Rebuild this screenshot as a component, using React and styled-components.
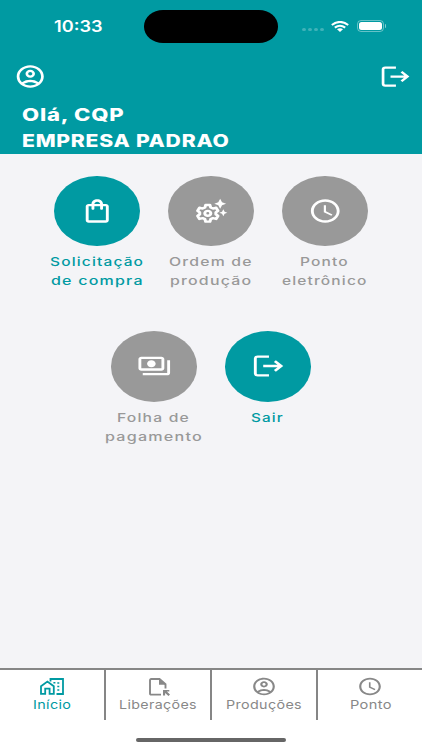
import React, { useLayoutEffect, useRef, useState } from "react";
import styled, { createGlobalStyle } from "styled-components";
import {
  MdOutlineAccountCircle,
  MdOutlineShoppingBag,
  MdAccessTime,
  MdOutlinePayments,
} from "react-icons/md";

const TEAL = "#009aa2";
const GREY = "#999999";

const GlobalStyle = createGlobalStyle`
  * { box-sizing: border-box; }
  body { margin: 0; font-family: Inter, "Liberation Sans", sans-serif; }
`;

const Screen = styled.div`
  width: 422px;
  height: 750px;
  display: flex;
  flex-direction: column;
  background: #f4f4f7;
  overflow: hidden;
`;

const Header = styled.header`
  height: 154px;
  flex: none;
  background: ${TEAL};
  color: #fff;
`;

const StatusBar = styled.div`
  height: 42px;
  padding: 10px 36px 0 54px;
  display: grid;
  grid-template-columns: 90px 134px 1fr;
  align-items: start;
`;

const Island = styled.div`
  height: 32.5px;
  border-radius: 19px / 16.25px;
  background: #000;
`;

const StatusTime = styled.div`
  padding-top: 6px;
`;

const StatusIcons = styled.div`
  height: 32px;
  display: flex;
  align-items: center;
  justify-content: flex-end;
`;

const HeaderActions = styled.div`
  height: 60px;
  padding: 9px 11px 0 14px;
  display: flex;
  align-items: center;
  justify-content: space-between;
`;

const Greeting = styled.div`
  padding-left: 22px;
`;

const Line = styled.div`
  display: flex;
  justify-content: ${(p) => p.$align || "center"};
  height: ${(p) => p.$height}px;
  line-height: ${(p) => p.$height}px;
`;

const LineBox = styled.span`
  flex: none;
  display: block;
  text-align: left;
`;

const LineText = styled.span`
  display: inline-block;
  white-space: nowrap;
  transform-origin: 0 50%;
  font-size: ${(p) => p.$size}px;
  font-weight: ${(p) => p.$weight};
  letter-spacing: ${(p) => p.$spacing}px;
  margin-right: ${(p) => -p.$spacing}px;
`;

/* One line of text, widened to the given width. */
function WideText({ children, width, size, weight = 400, spacing = 0, height = 18.7, align }) {
  const ref = useRef(null);
  const [scale, setScale] = useState(1);
  useLayoutEffect(() => {
    setScale(width / (ref.current.offsetWidth - spacing));
  }, [width, size, weight, spacing, children]);
  return (
    <Line $align={align} $height={height}>
      <LineBox style={{ width }}>
        <LineText
          ref={ref}
          $size={size}
          $weight={weight}
          $spacing={spacing}
          style={{ transform: `scaleX(${scale})` }}
        >
          {children}
        </LineText>
      </LineBox>
    </Line>
  );
}

const Glyph = styled.span`
  display: block;
  flex: none;
  width: ${(p) => p.$w}px;
  height: ${(p) => p.$h}px;
  svg { display: block; width: 100%; height: 100%; }
`;

const Icon = ({ as: Shape, w, h }) => (
  <Glyph $w={w} $h={h}>
    <Shape preserveAspectRatio="none" />
  </Glyph>
);

const ExitIcon = (props) => (
  <svg viewBox="0 0 24 24" fill="none" stroke="currentColor" strokeWidth="2" {...props}>
    <path d="M12.5 4H4.6Q3 4 3 5.6V18.4Q3 20 4.6 20H12.5" />
    <path d="M8.5 12H21M16.6 7.8L21 12L16.6 16.2" />
  </svg>
);

const GearIcon = (props) => (
  <svg viewBox="0 0 24 24" fill="none" stroke="currentColor" strokeWidth="2.1" {...props}>
    <g transform="translate(9.6 14)">
      <path
        strokeLinejoin="round"
        d="M-1.5 -7.1H1.5L2 -5L3.6 -4.1L5.8 -4.8L7.1 -2.2L5.6 -.8V.8L7.1 2.2L5.8 4.8L3.6 4.1L2 5L1.5 7.1H-1.5L-2 5L-3.6 4.1L-5.8 4.8L-7.1 2.2L-5.6 .8V-.8L-7.1 -2.2L-5.8 -4.8L-3.6 -4.1L-2 -5Z"
      />
      <circle r="2.1" />
    </g>
    <g fill="currentColor" stroke="none">
      <path d="M18.2 1.5L19.5 4.5L22.3 5.8L19.5 7.1L18.2 10.1L16.9 7.1L14.1 5.8L16.9 4.5Z" />
      <path d="M20.4 10.5L21.3 12.6L23.2 13.5L21.3 14.4L20.4 16.5L19.5 14.4L17.6 13.5L19.5 12.6Z" />
    </g>
  </svg>
);

const HomeIcon = (props) => (
  <svg viewBox="0 0 24 17" fill="none" stroke="currentColor" strokeWidth="1.8" {...props}>
    <path d="M1 15.9V8.3L7.4 3.5L13.8 8.3V15.9H9.6V10.6H5.2V15.9Z" />
    <path d="M10.5 3.5V1H23V16H16.5" />
    <path d="M18.3 4.2V5.8M18.3 7.7V9.3M18.3 11.2V12.8M14.4 4V5.4" strokeWidth="2" />
  </svg>
);

const FileIcon = (props) => (
  <svg viewBox="0 0 21 18" fill="none" stroke="currentColor" strokeWidth="1.9" {...props}>
    <path d="M12 16.6H2.2Q1 16.6 1 15.4V2.2Q1 1 2.2 1H10.5L16.5 6.2V10.5" />
    <path d="M10 1V6.8H16.8Z" fill="currentColor" stroke="none" />
    <path d="M14 12H20.3V13.6H17.8L21 16.6L19.5 18L16.1 14.9V17.4H14Z" fill="currentColor" stroke="none" />
  </svg>
);

const WifiIcon = (props) => (
  <svg viewBox="0 0 18 11" fill="none" stroke="currentColor" strokeWidth="2.1" {...props}>
    <path d="M.8 4Q9-2.1 17.2 4M3.8 6.7Q9 2.8 14.2 6.7" />
    <path d="M6 8.3Q9 6.1 12 8.3L9 11Z" fill="currentColor" stroke="none" />
  </svg>
);

const Dots = styled.div`
  display: flex;
  gap: 2.2px;
  margin: 7px 7px 0 0;
`;

const Dot = styled.i`
  width: 3.7px;
  height: 3px;
  border-radius: 50%;
  background: rgba(255, 255, 255, 0.25);
`;

const Battery = styled.div`
  width: 27px;
  height: 12px;
  margin-left: 8px;
  padding: 1px;
  border: 1px solid rgba(255, 255, 255, 0.4);
  border-radius: 4px;
  display: flex;
`;

const Charge = styled.i`
  flex: 1;
  border-radius: 2.5px;
  background: #fff;
`;

const BatteryTip = styled.i`
  width: 1.5px;
  height: 4px;
  margin-left: 1px;
  border-radius: 0 2px 2px 0;
  background: rgba(255, 255, 255, 0.5);
`;

const Menu = styled.main`
  flex: 1;
  padding-top: 21.5px;
`;

const MenuRow = styled.div`
  height: 155.7px;
  display: flex;
  align-items: flex-start;
  justify-content: center;
  gap: 14px;
`;

const MenuItem = styled.button`
  width: 100px;
  padding: 0;
  border: 0;
  background: none;
  font-family: inherit;
  color: ${(p) => (p.$active ? TEAL : GREY)};
`;

const Disc = styled.div`
  width: 86px;
  height: 70.5px;
  margin: 0 auto 6.2px;
  border-radius: 50%;
  display: flex;
  align-items: center;
  justify-content: center;
  color: #fff;
  background: ${(p) => (p.$active ? TEAL : GREY)};
`;

const MenuLabel = styled.div`
  padding-right: 2px;
`;

const rows = [
  [
    { icon: MdOutlineShoppingBag, active: true, lines: [["Solicitação", 93], ["de compra", 91]] },
    { icon: GearIcon, lines: [["Ordem de", 83], ["produção", 81]] },
    { icon: MdAccessTime, lines: [["Ponto", 48], ["eletrônico", 84]] },
  ],
  [
    { icon: MdOutlinePayments, lines: [["Folha de", 72], ["pagamento", 97]] },
    { icon: ExitIcon, active: true, lines: [["Sair", 32]] },
  ],
];

const TabBar = styled.nav`
  height: 52px;
  flex: none;
  border-top: 2px solid #868686;
  background: #fff;
  display: grid;
  grid-template-columns: 106px 106px 106px 104px;
`;

const Tab = styled.a`
  padding-top: 8px;
  border-right: ${(p) => (p.$last ? "0" : "2px solid #868686")};
  color: ${(p) => (p.$active ? TEAL : "#888")};
  display: flex;
  flex-direction: column;
  align-items: center;
`;

const TabIcon = styled.div`
  height: 17.5px;
  display: flex;
  align-items: center;
  padding-left: ${(p) => p.$shift || 0}px;
`;

const tabs = [
  { label: "Início", width: 38, icon: HomeIcon, w: 24, h: 17, active: true },
  { label: "Liberações", width: 78, icon: FileIcon, w: 21, h: 18, shift: 3 },
  { label: "Produções", width: 76, icon: MdOutlineAccountCircle, w: 26, h: 21 },
  { label: "Ponto", width: 41, icon: MdAccessTime, w: 26, h: 21 },
];

const HomeArea = styled.div`
  height: 30px;
  flex: none;
  padding-top: 18px;
  background: #fff;
`;

const HomeIndicator = styled.div`
  width: 150px;
  height: 4px;
  margin: 0 auto;
  border-radius: 2px;
  background: #666;
`;

export default function App() {
  return (
    <Screen>
      <GlobalStyle />
      <Header>
        <StatusBar>
          <StatusTime>
            <WideText width={48} size={15.5} weight={600} height={20} align="flex-start">10:33</WideText>
          </StatusTime>
          <Island />
          <StatusIcons>
            <Dots><Dot /><Dot /><Dot /><Dot /></Dots>
            <Icon as={WifiIcon} w={18} h={11} />
            <Battery><Charge /></Battery>
            <BatteryTip />
          </StatusIcons>
        </StatusBar>
        <HeaderActions>
          <Icon as={MdOutlineAccountCircle} w={32.5} h={27} />
          <Icon as={ExitIcon} w={32.5} h={27} />
        </HeaderActions>
        <Greeting>
          <WideText width={102} size={17} weight={800} spacing={0.6} height={26.3} align="flex-start">Olá, CQP</WideText>
          <WideText width={207} size={17} weight={800} spacing={0.6} height={26.3} align="flex-start">EMPRESA PADRAO</WideText>
        </Greeting>
      </Header>
      <Menu>
        {rows.map((row, i) => (
          <MenuRow key={i}>
            {row.map((item) => (
              <MenuItem key={item.lines[0][0]} $active={item.active}>
                <Disc $active={item.active}>
                  <Icon as={item.icon} w={34.5} h={28} />
                </Disc>
                <MenuLabel>
                  {item.lines.map(([text, width]) => (
                    <WideText key={text} width={width} size={12} weight={500} spacing={0.9}>{text}</WideText>
                  ))}
                </MenuLabel>
              </MenuItem>
            ))}
          </MenuRow>
        ))}
      </Menu>
      <TabBar>
        {tabs.map((tab, i) => (
          <Tab key={tab.label} $active={tab.active} $last={i === tabs.length - 1}>
            <TabIcon $shift={tab.shift}><Icon as={tab.icon} w={tab.w} h={tab.h} /></TabIcon>
            <WideText width={tab.width} size={12} spacing={0.3} height={15.5}>{tab.label}</WideText>
          </Tab>
        ))}
      </TabBar>
      <HomeArea><HomeIndicator /></HomeArea>
    </Screen>
  );
}
